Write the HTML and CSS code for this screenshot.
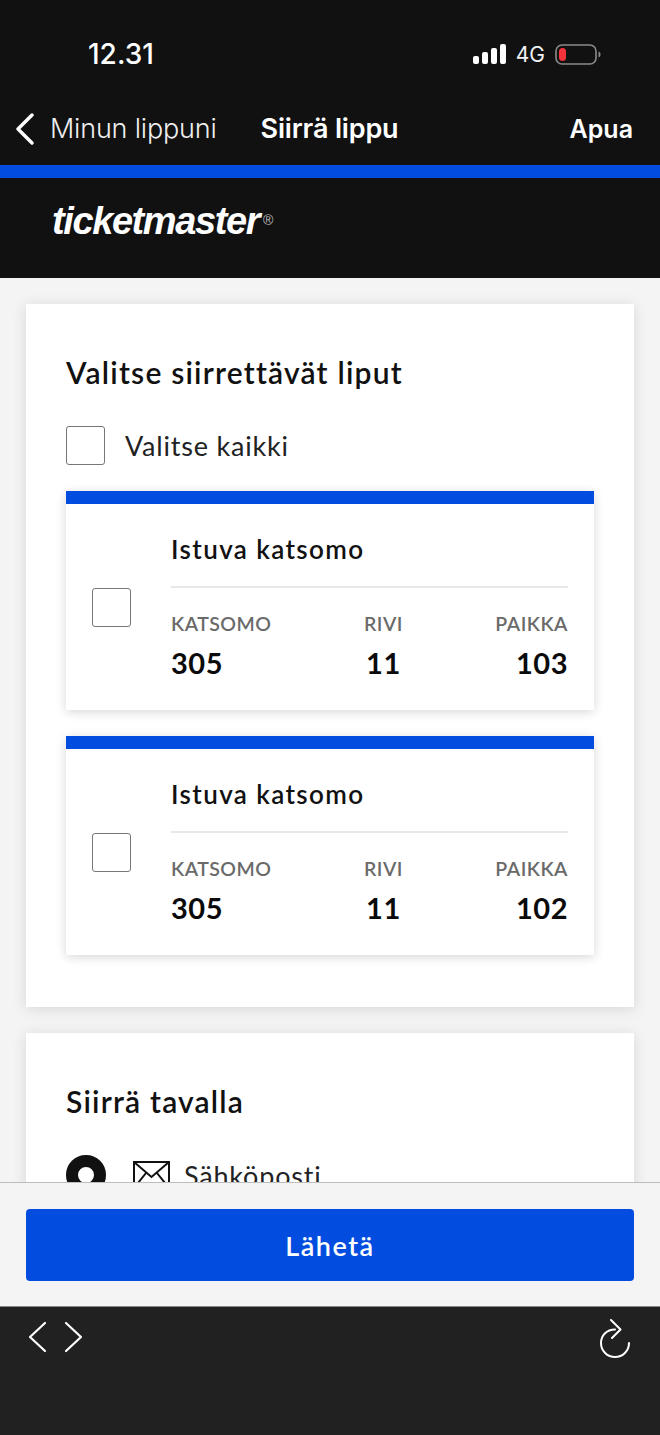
FILE: index.html
```html
<!DOCTYPE html>
<html lang="fi">
<head>
<meta charset="UTF-8">
<meta name="viewport" content="width=device-width, initial-scale=1.0">
<title>Siirrä lippu</title>
<link rel="stylesheet" href="styles.css">
</head>
<body>
  <header class="top">
    <div class="status">
      <span class="time">12.31</span>
      <div class="status-right">
        <svg class="signal" width="33" height="20" viewBox="0 0 33 20" fill="#fff">
          <rect x="0" y="12" width="6" height="8" rx="2"/>
          <rect x="9" y="8" width="6" height="12" rx="2"/>
          <rect x="18" y="4" width="6" height="16" rx="2"/>
          <rect x="27" y="0" width="6" height="20" rx="2"/>
        </svg>
        <span class="net">4G</span>
        <svg class="battery" width="46" height="21" viewBox="0 0 46 21">
          <rect x="1" y="1" width="40" height="19" rx="6" fill="none" stroke="#8a8a8a" stroke-width="1.6"/>
          <rect x="4" y="4" width="7" height="13" rx="3.5" fill="#f5333a"/>
          <path d="M43.5 7.5c1.5.6 2 1.6 2 3s-.5 2.400-2 3z" fill="#8a8a8a"/>
        </svg>
      </div>
    </div>
    <nav class="nav">
      <svg class="back" width="20" height="32" viewBox="0 0 20 32">
        <path d="M17 2 3 16l14 14" fill="none" stroke="#fff" stroke-width="3.4" stroke-linecap="round" stroke-linejoin="round"/>
      </svg>
      <span class="nav-back">Minun lippuni</span>
      <span class="nav-title">Siirrä lippu</span>
      <span class="nav-help">Apua</span>
    </nav>
    <div class="stripe"></div>
    <div class="brand">
      <span class="logo">ticketmaster</span><span class="reg">®</span>
    </div>
  </header>

  <main class="content">
    <section class="card">
      <h2>Valitse siirrettävät liput</h2>
      <label class="select-all">
        <span class="box"></span>
        <span>Valitse kaikki</span>
      </label>

      <div class="ticket">
        <span class="box"></span>
        <div class="ticket-info">
          <h3>Istuva katsomo</h3>
          <div class="seat">
            <div class="col">
              <span class="lbl">KATSOMO</span>
              <span class="val">305</span>
            </div>
            <div class="col mid">
              <span class="lbl">RIVI</span>
              <span class="val">11</span>
            </div>
            <div class="col end">
              <span class="lbl">PAIKKA</span>
              <span class="val">103</span>
            </div>
          </div>
        </div>
      </div>

      <div class="ticket">
        <span class="box"></span>
        <div class="ticket-info">
          <h3>Istuva katsomo</h3>
          <div class="seat">
            <div class="col">
              <span class="lbl">KATSOMO</span>
              <span class="val">305</span>
            </div>
            <div class="col mid">
              <span class="lbl">RIVI</span>
              <span class="val">11</span>
            </div>
            <div class="col end">
              <span class="lbl">PAIKKA</span>
              <span class="val">102</span>
            </div>
          </div>
        </div>
      </div>
    </section>

    <section class="card">
      <h2>Siirrä tavalla</h2>
      <div class="method">
        <span class="radio"></span>
        <svg class="mail" width="37" height="28" viewBox="0 0 37 28">
          <rect x="1" y="1" width="35" height="26" fill="none" stroke="#111" stroke-width="2"/>
          <path d="M1 1l17.500 15L36 1M1 27l12-15M36 27 24 12" fill="none" stroke="#111" stroke-width="2"/>
        </svg>
        <span>Sähköposti</span>
      </div>
    </section>
  </main>

  <footer class="actions">
    <button class="send">Lähetä</button>
  </footer>

  <div class="toolbar">
    <div class="arrows">
      <svg width="20" height="32" viewBox="0 0 20 32">
        <path d="M17 2 2 16l15 14" fill="none" stroke="#fff" stroke-width="2.200" stroke-linecap="round" stroke-linejoin="round"/>
      </svg>
      <svg width="20" height="32" viewBox="0 0 20 32">
        <path d="M3 2l15 14L3 30" fill="none" stroke="#fff" stroke-width="2.200" stroke-linecap="round" stroke-linejoin="round"/>
      </svg>
    </div>
    <svg class="reload" width="34" height="40" viewBox="0 0 34 40">
      <path d="M17 10.500C8.500 10.500 3 16.500 3 24c0 8 6.300 14 14 14s14-6 14-14" fill="none" stroke="#fff" stroke-width="2" stroke-linecap="round"/>
      <path d="M13 1l9.500 9.500L14 19" fill="none" stroke="#fff" stroke-width="2" stroke-linecap="round" stroke-linejoin="round"/>
    </svg>
  </div>
</body>
</html>
```

FILE: styles.css
```css
body {
  margin: 0;
  width: 660px;
  height: 1435px;
  overflow: hidden;
  display: flex;
  flex-direction: column;
  font-family: 'Lato', sans-serif;
  color: #111;
  background: #f4f4f4;
}
.top {
  background: #111112;
  color: #fff;
  height: 278px;
  flex-shrink: 0;
  font-family: 'Inter', sans-serif;
}
.status {
  height: 108px;
  display: flex;
  justify-content: space-between;
  align-items: flex-start;
  box-sizing: border-box;
  padding: 38px 59px 0 88px;
}
.time {
  font-size: 28px;
  font-weight: 500;
  line-height: 32px;
}
.status-right {
  display: flex;
  align-items: center;
  height: 32px;
}
.net {
  font-size: 21px;
  margin: 0 10px;
  color: #f2f2f2;
}
.nav {
  height: 57px;
  box-sizing: border-box;
  display: flex;
  align-items: center;
  padding: 0 27px 16px 15px;
  font-size: 27px;
}
.back {
  margin-right: 15px;
}
.nav-back {
  font-weight: 300;
  color: #eee;
  letter-spacing: -0.2px;
}
.nav-title {
  margin-left: 44px;
  font-weight: 600;
  letter-spacing: -0.15px;
}
.nav-help {
  margin-left: auto;
  font-weight: 600;
  font-size: 25px;
}
.stripe {
  height: 13px;
  background: #024ddf;
}
.brand {
  height: 100px;
  box-sizing: border-box;
  padding: 20px 0 0 52px;
  display: flex;
  align-items: flex-start;
}
.logo {
  font-family: 'Liberation Sans', sans-serif;
  font-size: 38px;
  font-weight: bold;
  font-style: italic;
  letter-spacing: -1.4px;
  line-height: 46px;
}
.reg {
  font-family: 'Liberation Sans', sans-serif;
  font-size: 14px;
  color: #bbb;
  margin: 14px 0 0 4px;
}
.content {
  flex: 1;
  min-height: 0;
  overflow: hidden;
  padding: 26px 26px 0;
}
.card {
  background: #fff;
  padding: 48px 40px 52px;
  margin-bottom: 26px;
  box-shadow: 0 2px 14px rgba(0,0,0,0.12);
}
h2 {
  margin: 0;
  font-size: 30px;
  line-height: 40px;
  font-weight: 600;
  letter-spacing: 1.2px;
}
.select-all {
  display: flex;
  align-items: center;
  gap: 20px;
  margin-top: 34px;
  font-size: 27px;
  letter-spacing: 0.8px;
  color: #222;
}
.box {
  display: block;
  width: 37px;
  height: 37px;
  border: 1px solid #777;
  border-radius: 3px;
  background: #fff;
  flex-shrink: 0;
}
.ticket {
  display: flex;
  align-items: center;
  margin-top: 26px;
  border-top: 13px solid #024ddf;
  background: #fff;
  box-shadow: 0 2px 10px rgba(0,0,0,0.16);
  padding: 29px 26px 29px;
}
.ticket .box {
  margin-right: 40px;
}
.ticket-info {
  flex: 1;
}
h3 {
  margin: 0;
  font-size: 26px;
  line-height: 32px;
  font-weight: 600;
  letter-spacing: 1.4px;
  padding-bottom: 21px;
  border-bottom: 2px solid #e8e8e8;
}
.seat {
  display: flex;
  justify-content: space-between;
  margin-top: 23px;
}
.col {
  display: flex;
  flex-direction: column;
}
.col.mid {
  align-items: center;
}
.col.end {
  align-items: flex-end;
}
.lbl {
  font-size: 19.5px;
  line-height: 26px;
  font-weight: 600;
  letter-spacing: 0.5px;
  color: #6a6a6a;
}
.val {
  font-size: 29px;
  line-height: 36px;
  font-weight: 700;
  letter-spacing: 0.5px;
  margin-top: 8px;
  color: #0a0a0a;
}
.method {
  display: flex;
  align-items: center;
  margin-top: 34px;
  font-size: 27px;
  letter-spacing: 0.8px;
  color: #222;
}
.radio {
  width: 40px;
  height: 40px;
  box-sizing: border-box;
  border: 12px solid #111;
  border-radius: 50%;
  margin-right: 27px;
}
.mail {
  margin-right: 14px;
}
.actions {
  flex-shrink: 0;
  height: 125px;
  box-sizing: border-box;
  padding: 26px 26px 0;
  background: #f4f4f4;
  border-top: 1px solid #bdbdbd;
  border-bottom: 1px solid #888;
}
.send {
  display: block;
  width: 100%;
  height: 72px;
  border: none;
  border-radius: 4px;
  background: #024ddf;
  color: #fff;
  font-family: 'Lato', sans-serif;
  font-size: 27px;
  font-weight: 600;
  letter-spacing: 1.5px;
}
.toolbar {
  flex-shrink: 0;
  height: 128px;
  box-sizing: border-box;
  background: #212121;
  padding: 14px 28px 0;
  display: flex;
  justify-content: space-between;
  align-items: flex-start;
}
.arrows {
  display: flex;
  gap: 15px;
}
.reload {
  margin-top: -2px;
  margin-right: 0;
}
```
